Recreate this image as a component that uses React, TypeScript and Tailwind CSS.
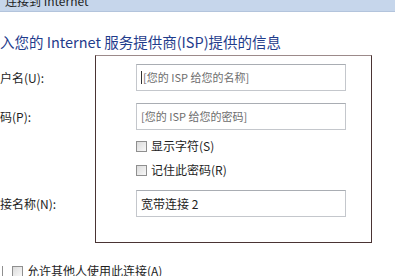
import React from 'react';

const font = { fontFamily: '"Segoe UI", "Noto Sans CJK SC", "Noto Sans", sans-serif' };

function Checkbox() {
  return (
    <span className="inline-block w-[11px] h-[11px] border border-[#8f8f8f] bg-gradient-to-br from-[#dcdcdc] to-[#f8f8f8] shrink-0" />
  );
}

function Field({ text, placeholder, caret }: { text: string; placeholder?: boolean; caret?: boolean }) {
  return (
    <div className="h-[27px] w-[210px] border border-[#c4c7cc] border-t-[#a9adb3] bg-white flex items-center pl-[4px]">
      {caret && <span className="w-px h-[13px] bg-[#333] mr-[1px]" />}
      <span className={placeholder ? 'text-[11px] text-[#6d6d6d]' : 'text-[12px] text-[#222]'}>{text}</span>
    </div>
  );
}

export default function App() {
  return (
    <div className="w-[395px] h-[276px] overflow-hidden bg-white relative" style={font}>
      {/* title bar */}
      <div className="h-[12px] bg-[#c6d6eb] border-b border-[#b3c4dc] overflow-hidden">
        <div className="text-[12px] leading-[12px] text-[#1e1e1e] pl-[5px] -mt-[5px]">连接到 Internet</div>
      </div>

      <div className="mt-[21px] text-[14.5px] leading-[17px] text-[#1f3c8c] whitespace-nowrap">
        入您的 Internet 服务提供商(ISP)提供的信息
      </div>

      <div className="flex mt-[5px]">
        {/* labels */}
        <div className="w-[95px] flex flex-col text-[12px] text-[#1e1e1e]">
          <div className="h-[27px] mt-[9px] flex items-center">户名(U):</div>
          <div className="h-[27px] mt-[12px] flex items-center">码(P):</div>
          <div className="h-[40px] mt-[10px]" />
          <div className="h-[27px] mt-[10px] flex items-center">接名称(N):</div>
        </div>

        {/* annotated box */}
        <div className="w-[277px] h-[188px] border border-[#4a3434] border-t-[#9c8a8a] pl-[40px] pt-[8px] flex flex-col">
          <Field text="[您的 ISP 给您的名称]" placeholder caret />
          <div className="mt-[12px]">
            <Field text="[您的 ISP 给您的密码]" placeholder />
          </div>
          <div className="h-[20px] mt-[6px] flex items-center gap-[4px] text-[12px] text-[#1e1e1e]">
            <Checkbox />
            <span>显示字符(S)</span>
          </div>
          <div className="h-[20px] mt-[4px] flex items-center gap-[4px] text-[12px] text-[#1e1e1e]">
            <Checkbox />
            <span>记住此密码(R)</span>
          </div>
          <div className="mt-[10px]">
            <Field text="宽带连接 2" />
          </div>
        </div>
      </div>

      <div className="mt-[19px] flex items-center gap-[4px] text-[12px] text-[#1e1e1e] whitespace-nowrap">
        <span className="w-[3px] h-[11px] border-r border-[#8f8f8f]" />
        <span className="ml-[5px] flex"><Checkbox /></span>
        <span>允许其他人使用此连接(A)</span>
      </div>
    </div>
  );
}
